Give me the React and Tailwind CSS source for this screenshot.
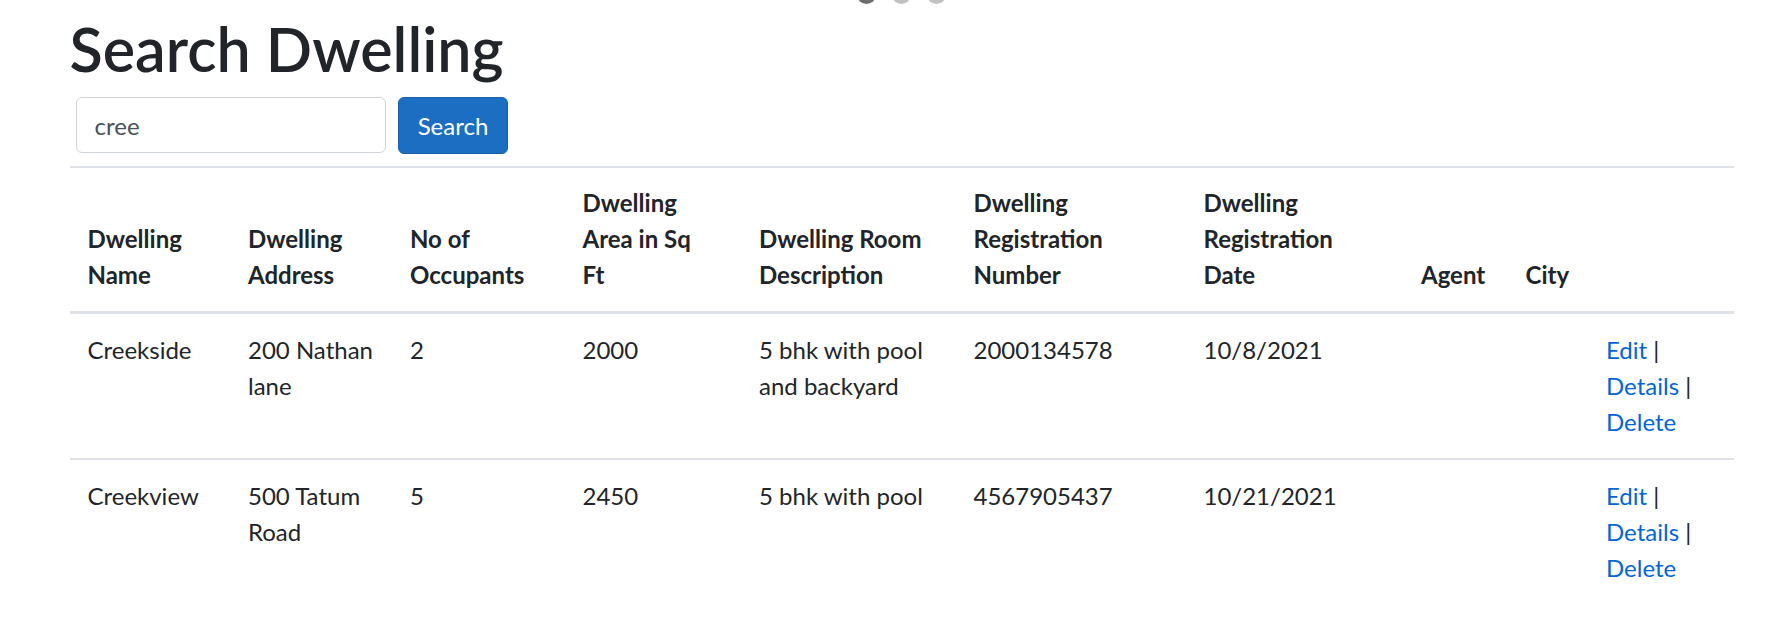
import React, { useState } from 'react';

const headers = [
  ['Dwelling', 'Name'],
  ['Dwelling', 'Address'],
  ['No of', 'Occupants'],
  ['Dwelling', 'Area in Sq', 'Ft'],
  ['Dwelling Room', 'Description'],
  ['Dwelling', 'Registration', 'Number'],
  ['Dwelling', 'Registration', 'Date'],
  ['Agent'],
  ['City'],
  [],
];

const dwellings = [
  {
    name: 'Creekside',
    address: ['200 Nathan', 'lane'],
    occupants: '2',
    area: '2000',
    rooms: ['5 bhk with pool', 'and backyard'],
    regNumber: '2000134578',
    regDate: '10/8/2021',
  },
  {
    name: 'Creekview',
    address: ['500 Tatum', 'Road'],
    occupants: '5',
    area: '2450',
    rooms: ['5 bhk with pool'],
    regNumber: '4567905437',
    regDate: '10/21/2021',
  },
];

const Lines = ({ lines }) => (
  <>
    {lines.map((line, i) => (
      <div key={i} className="whitespace-nowrap">
        {line}
      </div>
    ))}
  </>
);

const SearchDwelling = () => {
  const [query, setQuery] = useState('cree');

  return (
    <div className="relative min-h-screen bg-white font-['Lato','Open_Sans',sans-serif] text-[24px] leading-[36px] text-[#212529]">
      {/* progress dots peeking in at the top */}
      <div className="absolute left-[857px] top-[-15px] flex gap-[16px]">
        <span className="block h-[19px] w-[19px] rounded-full bg-[#6e6e6e]" />
        <span className="block h-[19px] w-[19px] rounded-full bg-[#c2c2c2]" />
        <span className="block h-[19px] w-[19px] rounded-full bg-[#c2c2c2]" />
      </div>

      <div className="pl-[69.5px] pr-[43.5px] pt-[13px]">
        <h1 className="mb-[12px] text-[61px] font-semibold leading-[72px] text-[#212529]">
          Search Dwelling
        </h1>

        <form className="flex items-start gap-[12.5px] pl-[6px]" onSubmit={(e) => e.preventDefault()}>
          <input
            className="h-[56px] w-[310px] rounded-[6px] border border-[#ced4da] px-[18px] text-[24px] text-[#495057] outline-none"
            value={query}
            onChange={(e) => setQuery(e.target.value)}
          />
          <button className="h-[57px] w-[110px] rounded-[6px] border border-[#1861ac] bg-[#1b6ec2] text-[24px] text-white">
            Search
          </button>
        </form>

        <table className="mt-[12px] w-full table-fixed border-separate border-spacing-0 text-left">
          <colgroup>
            <col className="w-[160.5px]" />
            <col className="w-[162px]" />
            <col className="w-[172.5px]" />
            <col className="w-[176.5px]" />
            <col className="w-[214.5px]" />
            <col className="w-[230px]" />
            <col className="w-[217.5px]" />
            <col className="w-[104.5px]" />
            <col className="w-[80.5px]" />
            <col className="w-[146px]" />
          </colgroup>
          <thead>
            <tr>
              {headers.map((h, i) => (
                <th
                  key={i}
                  className="border-t-2 border-b-[3px] border-[#dee2e6] px-[18px] pt-[17px] pb-[18px] align-bottom font-bold"
                >
                  <Lines lines={h} />
                </th>
              ))}
            </tr>
          </thead>
          <tbody>
            {dwellings.map((d, idx) => (
              <tr key={d.name} className="align-top">
                <td className={`${idx > 0 ? 'border-t-2' : ''} border-[#dee2e6] p-[18px]`}>{d.name}</td>
                <td className={`${idx > 0 ? 'border-t-2' : ''} border-[#dee2e6] p-[18px]`}>
                  <Lines lines={d.address} />
                </td>
                <td className={`${idx > 0 ? 'border-t-2' : ''} border-[#dee2e6] p-[18px]`}>{d.occupants}</td>
                <td className={`${idx > 0 ? 'border-t-2' : ''} border-[#dee2e6] p-[18px]`}>{d.area}</td>
                <td className={`${idx > 0 ? 'border-t-2' : ''} border-[#dee2e6] p-[18px]`}>
                  <Lines lines={d.rooms} />
                </td>
                <td className={`${idx > 0 ? 'border-t-2' : ''} border-[#dee2e6] p-[18px]`}>{d.regNumber}</td>
                <td className={`${idx > 0 ? 'border-t-2' : ''} border-[#dee2e6] p-[18px]`}>{d.regDate}</td>
                <td className={`${idx > 0 ? 'border-t-2' : ''} border-[#dee2e6] p-[18px]`}></td>
                <td className={`${idx > 0 ? 'border-t-2' : ''} border-[#dee2e6] p-[18px]`}></td>
                <td className={`${idx > 0 ? 'border-t-2' : ''} border-[#dee2e6] p-[18px]`}>
                  <div className="whitespace-nowrap">
                    <a href="#" className="text-[#0366d6]">Edit</a> |
                  </div>
                  <div className="whitespace-nowrap">
                    <a href="#" className="text-[#0366d6]">Details</a> |
                  </div>
                  <div className="whitespace-nowrap">
                    <a href="#" className="text-[#0366d6]">Delete</a>
                  </div>
                </td>
              </tr>
            ))}
          </tbody>
        </table>
      </div>
    </div>
  );
};

export default SearchDwelling;
